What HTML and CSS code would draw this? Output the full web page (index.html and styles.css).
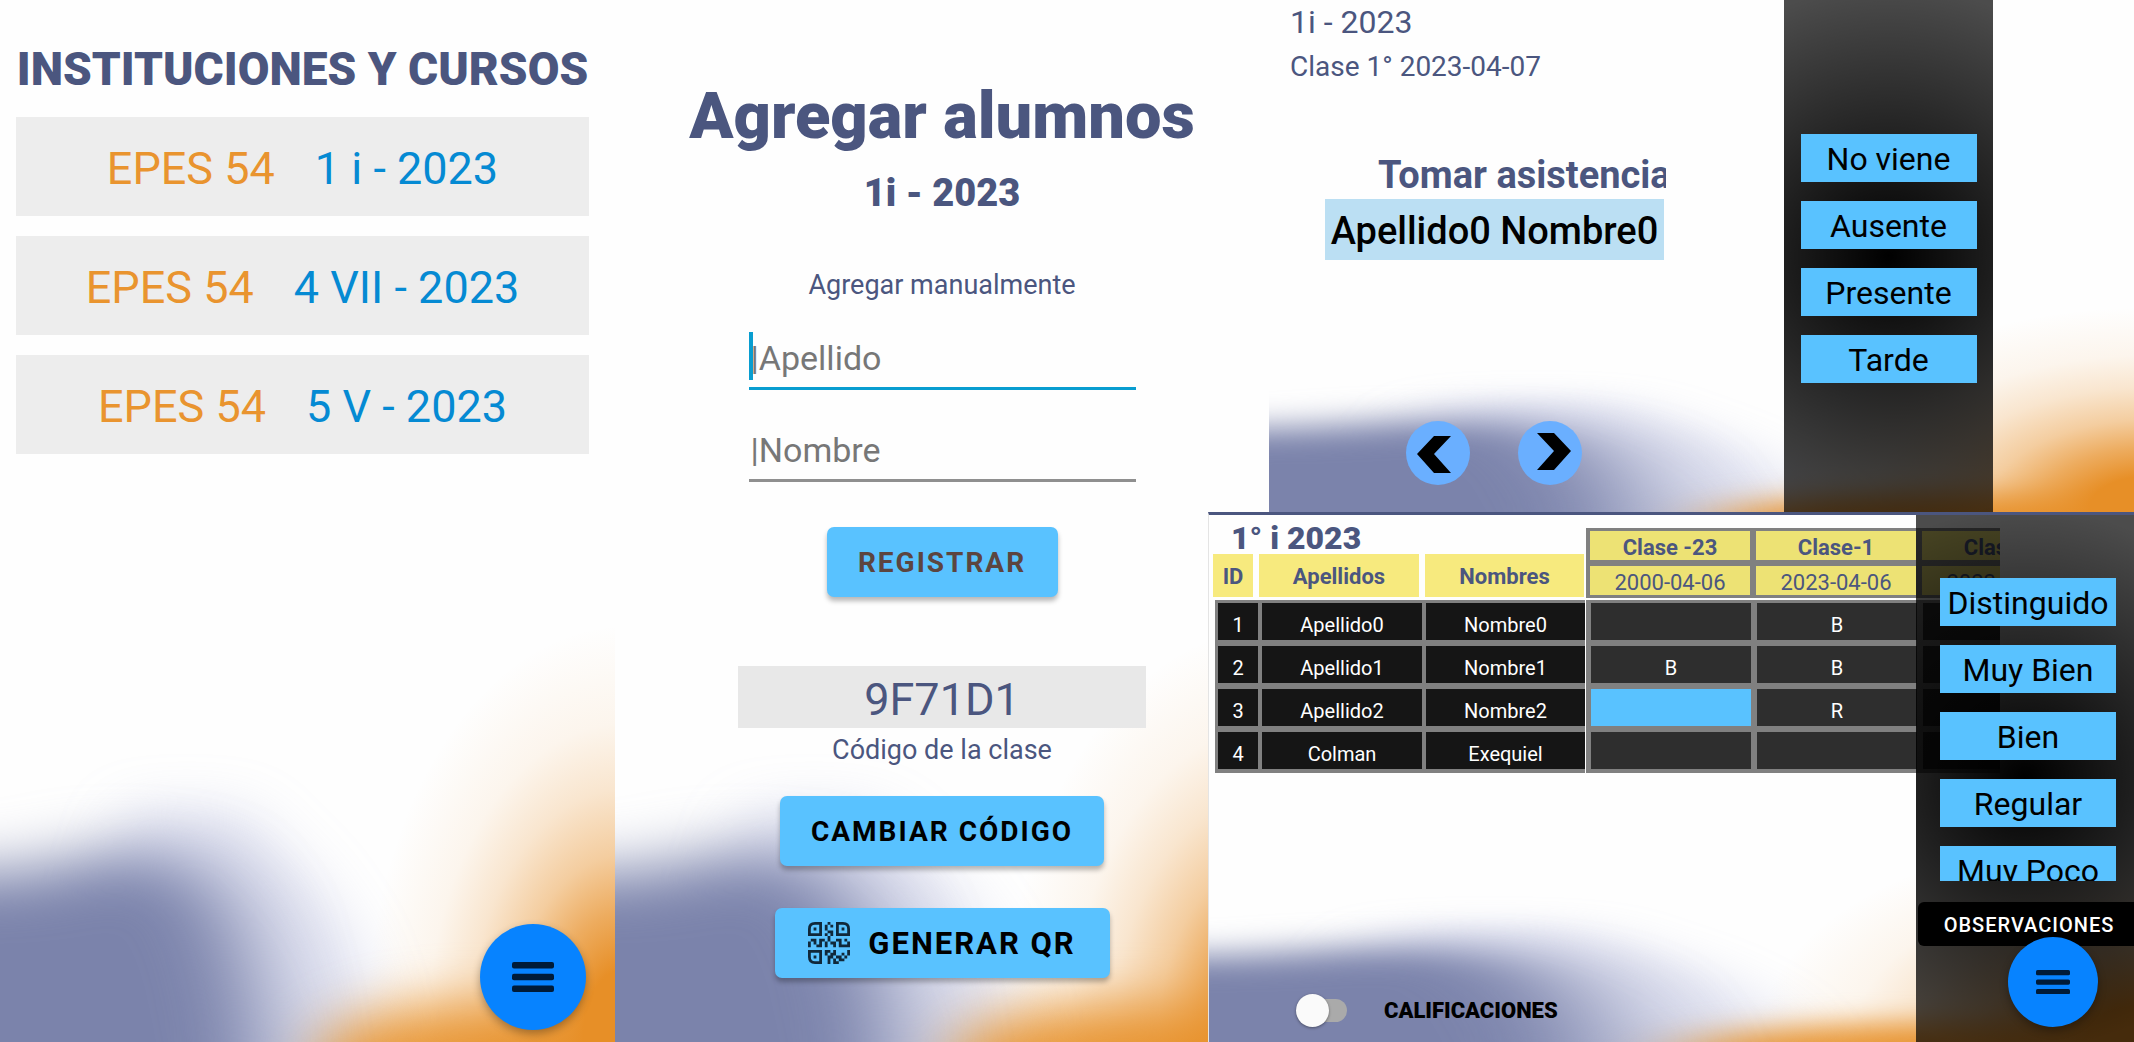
FILE: index.html
```html
<!DOCTYPE html>
<html lang="es">
<head>
<meta charset="utf-8">
<meta name="viewport" content="width=device-width, initial-scale=1">
<title>Instituciones y cursos</title>
<link rel="stylesheet" href="styles.css">
</head>
<body>
<main class="board">
  <section class="panel courses">
    <h1 class="courses-title">INSTITUCIONES Y CURSOS</h1>
    <ul class="course-list">
      <li><a class="course" href="#"><span class="school">EPES 54</span><span class="group">1 i - 2023</span></a></li>
      <li><a class="course" href="#"><span class="school">EPES 54</span><span class="group">4 VII - 2023</span></a></li>
      <li><a class="course" href="#"><span class="school">EPES 54</span><span class="group">5 V - 2023</span></a></li>
    </ul>
    <button class="fab" type="button" aria-label="Menú">
      <svg class="fab-icon" viewBox="0 0 42 30"><rect width="42" height="6.500" rx="2"/><rect y="11.700" width="42" height="6.500" rx="2"/><rect y="23.400" width="42" height="6.500" rx="2"/></svg>
    </button>
  </section>

  <section class="panel students">
    <h2 class="students-title">Agregar alumnos</h2>
    <p class="students-group">1i - 2023</p>
    <form class="students-form">
      <p class="note">Agregar manualmente</p>
      <div class="field field-active"><input type="text" placeholder="|Apellido" aria-label="Apellido"></div>
      <div class="field"><input type="text" placeholder="|Nombre" aria-label="Nombre"></div>
      <button class="btn btn-register" type="button">REGISTRAR</button>
    </form>
    <output class="code">9F71D1</output>
    <p class="note code-note">Código de la clase</p>
    <button class="btn btn-code" type="button">CAMBIAR CÓDIGO</button>
    <button class="btn btn-qr" type="button">
      <svg class="qr" viewBox="0 0 15 15" aria-hidden="true">
        <path d="M4.500 .5H2.500Q.5 .5 .5 2.500V4.500H4.500zM10.500 .5H12.500Q14.500 .5 14.500 2.500V4.500H10.500zM.5 10.500H4.500V14.500H2.500Q.5 14.500 .5 12.500z"/>
        <path d="M2 2.500h1M12 2.500h1M2 12.500h1M7 .5h1M6 1.500h1M8 1.500h1M6 2.500h1M7 3.500h2M6 4.500h1M8 4.500h1M7 5.500h1M1 6.500h2M4 6.500h2M7 6.500h1M10 6.500h2M13 6.500h1M0 7.500h1M2 7.500h1M4 7.500h1M6 7.500h1M8 7.500h2M11 7.500h1M14 7.500h1M0 8.500h1M3 8.500h2M6 8.500h1M9 8.500h1M11 8.500h4M6 10.500h2M9 10.500h1M14 10.500h1M6 11.500h1M8 11.500h2M12 11.500h1M14 11.500h1M7 12.500h2M10 12.500h2M13 12.500h1M7 13.500h1M9 13.500h1M11 13.500h2M7 14.500h1M9 14.500h2"/>
      </svg>
      GENERAR QR
    </button>
  </section>

  <section class="panel attendance">
    <div class="attendance-main">
      <p class="lesson">1i - 2023</p>
      <p class="lesson lesson-date">Clase 1° 2023-04-07</p>
      <h2 class="attendance-title">Tomar asistencia</h2>
      <p class="student">Apellido0 Nombre0</p>
      <div class="steps">
        <button class="step" type="button" aria-label="Anterior"><svg viewBox="0 0 64 64"><path d="M28 15h17L28 33l17 19H28L11 33z"/></svg></button>
        <button class="step" type="button" aria-label="Siguiente"><svg viewBox="0 0 64 64"><path d="M19 12h17l17 18-17 19H19l17-19z"/></svg></button>
      </div>
    </div>
    <aside class="shade attendance-side">
      <button class="option" type="button">No viene</button>
      <button class="option" type="button">Ausente</button>
      <button class="option" type="button">Presente</button>
      <button class="option" type="button">Tarde</button>
    </aside>
  </section>

  <section class="panel grades">
    <div class="grades-main">
      <div class="roster">
        <h2 class="grades-title">1° i 2023</h2>
        <table class="names">
          <thead><tr><th>ID</th><th>Apellidos</th><th>Nombres</th></tr></thead>
          <tbody>
            <tr><td>1</td><td>Apellido0</td><td>Nombre0</td></tr>
            <tr><td>2</td><td>Apellido1</td><td>Nombre1</td></tr>
            <tr><td>3</td><td>Apellido2</td><td>Nombre2</td></tr>
            <tr><td>4</td><td>Colman</td><td>Exequiel</td></tr>
          </tbody>
        </table>
      </div>
      <div class="marks-scroll">
        <table class="marks">
          <thead>
            <tr><th>Clase -23</th><th>Clase-1</th><th>Clase-2</th></tr>
            <tr><td>2000-04-06</td><td>2023-04-06</td><td>2023-04-07</td></tr>
          </thead>
          <tbody>
            <tr><td></td><td>B</td><td></td></tr>
            <tr><td>B</td><td>B</td><td></td></tr>
            <tr><td class="selected"></td><td>R</td><td></td></tr>
            <tr><td></td><td></td><td></td></tr>
          </tbody>
        </table>
      </div>
    </div>
    <label class="switch"><input type="checkbox"><span>CALIFICACIONES</span></label>
    <aside class="shade grades-side">
      <div class="options-scroll">
        <button class="option" type="button">Distinguido</button>
        <button class="option" type="button">Muy Bien</button>
        <button class="option" type="button">Bien</button>
        <button class="option" type="button">Regular</button>
        <button class="option" type="button">Muy Poco</button>
      </div>
      <button class="remarks" type="button">OBSERVACIONES</button>
      <button class="fab fab-small" type="button" aria-label="Menú">
        <svg class="fab-icon" viewBox="0 0 42 30"><rect width="42" height="6.500" rx="2"/><rect y="11.700" width="42" height="6.500" rx="2"/><rect y="23.400" width="42" height="6.500" rx="2"/></svg>
      </button>
    </aside>
  </section>
</main>
</body>
</html>
```
FILE: styles.css
```css
:root {
  --ink: #4b567f;
  --sky: #59c2ff;
  --azure: #0783ff;
  --orange: #e9942f;
}

* { box-sizing: border-box; }

body {
  margin: 0;
  font-family: Roboto, "Liberation Sans", sans-serif;
  color: var(--ink);
  background: #fff;
}

h1, h2, p, ul { margin: 0; padding: 0; }
ul { list-style: none; }
a { text-decoration: none; }
button, input { font: inherit; border: 0; padding: 0; }

/* The four screens; the grades screen overlaps the right edge of the students one. */
.board {
  display: grid;
  grid-template-columns: 615fr 593fr 61fr 865fr;
  grid-template-rows: 512fr 530fr;
  min-height: 100vh;
}

.panel {
  position: relative;
  min-width: 0;
  overflow: hidden;
  background: #fefefe url("data:image/svg+xml,%3Csvg xmlns='http://www.w3.org/2000/svg' viewBox='0 0 615 1042' preserveAspectRatio='none'%3E%3Cdefs%3E%3CradialGradient id='o' gradientUnits='userSpaceOnUse' cx='0' cy='0' r='1' gradientTransform='matrix(260 0 0 410 625 1035)'%3E%3Cstop offset='.16' stop-color='%23e78f27'/%3E%3Cstop offset='.3' stop-color='%23e78f27' stop-opacity='.74'/%3E%3Cstop offset='.44' stop-color='%23e78f27' stop-opacity='.44'/%3E%3Cstop offset='.6' stop-color='%23e78f27' stop-opacity='.22'/%3E%3Cstop offset='.76' stop-color='%23e78f27' stop-opacity='.08'/%3E%3Cstop offset='1' stop-color='%23e78f27' stop-opacity='0'/%3E%3C/radialGradient%3E%3Cfilter id='a' x='-50%25' y='-50%25' width='200%25' height='200%25' color-interpolation-filters='sRGB'%3E%3CfeGaussianBlur stdDeviation='46 30'/%3E%3C/filter%3E%3Cfilter id='b' x='-50%25' y='-50%25' width='200%25' height='200%25' color-interpolation-filters='sRGB'%3E%3CfeGaussianBlur stdDeviation='30 26'/%3E%3C/filter%3E%3C/defs%3E%3Cpath fill='%238f98cc' fill-opacity='.28' filter='url(%23b)' d='M100 900L130 810 240 810 310 880 350 940 375 1010 380 1200 100 1200z'/%3E%3Cellipse cx='475' cy='1065' rx='165' ry='62' fill='%23e78f27' fill-opacity='.9' filter='url(%23b)'/%3E%3Cpath fill='url(%23o)' d='M300 500h315v542H300z'/%3E%3Cpath fill='%237b83ab' filter='url(%23a)' d='M-250 868L20 874 110 850 190 860 235 912 255 980 266 1040 266 1300-250 1300z'/%3E%3C/svg%3E") 0 0 / 100% 100% no-repeat;
}

.courses { grid-area: 1 / 1 / 3 / 2; padding: 41px 26px 12px 16px; display: flex; flex-direction: column; }
.students { grid-area: 1 / 2 / 3 / 4; }
.attendance { grid-area: 1 / 4 / 2 / 5; }
.grades { grid-area: 2 / 3 / 3 / 5; border-top: 3px solid var(--ink); border-left: 1px solid #e4e4e4; }

/* Courses */
.courses-title { font-size: 46px; font-weight: 900; line-height: 56px; white-space: nowrap; text-align: center; margin-bottom: 20px; }
.course-list { display: grid; gap: 20px; }
.course {
  display: flex;
  justify-content: center;
  align-items: center;
  gap: 40px;
  height: 99px;
  padding-top: 4px;
  background: rgb(0 0 0 / 6.5%);
  font-size: 45px;
}
.school { color: var(--orange); }
.group { color: #058ad3; }

.fab {
  display: grid;
  place-items: center;
  width: 106px;
  height: 106px;
  border-radius: 50%;
  background: var(--azure);
  box-shadow: 0 4px 8px rgb(0 0 0 / 30%);
}
.fab-icon { width: 42px; fill: #001b38; }
.courses .fab { margin: auto 3px 0 auto; }

/* Students */
.students { display: flex; flex-direction: column; align-items: center; padding-top: 76px; }
.students-title { font-size: 65px; font-weight: 900; line-height: 80px; }
.students-group { font-size: 38px; font-weight: 900; line-height: 46px; margin-top: 14px; }
.students-form { display: flex; flex-direction: column; align-items: center; margin-top: 51px; }
.note { font-size: 27px; line-height: 36px; }
.field { position: relative; width: 387px; margin-top: 26px; }
.field + .field { margin-top: 31px; }
.field input {
  display: block;
  width: 100%;
  height: 61px;
  padding: 0 0 0 2px;
  background: transparent;
  border-bottom: 3px solid #8f8f8f;
  border-radius: 0;
  font-size: 34px;
}
.field input::placeholder { color: #777; opacity: 1; }
.field-active input { border-bottom-color: #089dd0; }
.field-active::before { content: ""; position: absolute; left: 0; top: 3px; width: 4px; height: 48px; background: #089dd0; }
.btn {
  display: flex;
  justify-content: center;
  align-items: center;
  height: 70px;
  border-radius: 7px;
  background: var(--sky);
  box-shadow: 0 4px 5px rgb(0 0 0 / 28%);
  color: #000;
  font-size: 28px;
  font-weight: 700;
  letter-spacing: 2px;
}
.btn-register { width: 231px; margin-top: 45px; color: #5c4540; }
.code { display: block; width: 408px; height: 62px; margin-top: 69px; background: #e8e8e8; font-size: 45px; line-height: 68px; text-align: center; }
.code-note { margin-top: 4px; }
.btn-code { width: 324px; margin-top: 28px; }
.btn-qr { width: 335px; margin-top: 42px; gap: 18px; font-size: 31px; }
.qr { width: 42px; height: 42px; fill: none; stroke: #10283a; }

/* Attendance */
.attendance { display: grid; grid-template-columns: 515fr 209fr 141fr; }
.attendance-main { padding: 0 0 0 21px; }
.lesson { font-size: 32px; line-height: 44px; }
.lesson-date { font-size: 28px; line-height: 46px; }
.attendance-title { width: 288px; margin: 61px 0 0 88px; overflow: hidden; font-size: 38px; font-weight: 700; line-height: 48px; white-space: nowrap; }
.student { width: 339px; height: 61px; margin-left: 35px; background: #bbdff3; color: #000; font-size: 38px; font-weight: 500; line-height: 65px; text-align: center; white-space: nowrap; }
.steps { display: flex; gap: 48px; margin: 161px 0 0 116px; }
.step { width: 64px; height: 64px; border-radius: 50%; background: #6aafff; }
.step svg { display: block; }
.shade { background: radial-gradient(circle 270px at center, #000, rgb(0 0 0 / 70%)); }
.attendance-side { display: flex; flex-direction: column; align-items: center; gap: 19px; padding-top: 134px; }
.option { flex: none; width: 176px; height: 48px; padding-top: 2px; background: var(--sky); color: #000; font-size: 32px; white-space: nowrap; }

/* Grades */
.grades-main { display: flex; width: 792px; padding: 13px 0 0 4px; }
.roster { width: 373px; }
.grades-title { margin: -3px 0 3px; padding-left: 18px; font-size: 32px; font-weight: 900; line-height: 26px; }
.names, .marks { display: block; font-size: 20px; text-align: center; }
.names thead, .names tbody, .marks thead, .marks tbody { display: grid; }
.names tr { display: grid; grid-template-columns: 40px 160px 159px; }
.names th, .names td, .marks th, .marks td { display: block; height: 37px; padding: 0; font-weight: 400; line-height: 44px; white-space: nowrap; }
.names thead tr { column-gap: 6px; }
.names th { height: 43px; background: #f7ea7e; font-size: 22px; font-weight: 700; line-height: 46px; }
.names tbody { row-gap: 6px; width: 370px; margin: 3px 0 0 2px; padding: 3px 0 4px 3px; background: #808080; }
.names tbody tr { column-gap: 4px; }
.names td { background: #151515; color: #fff; }
.marks-scroll { width: 414px; overflow: hidden; }
.marks { width: 501px; }
.marks tr { display: grid; grid-template-columns: repeat(3, 160px); column-gap: 6px; }
.marks thead { row-gap: 6px; padding: 3px 0 3px 4px; background: #808080; }
.marks thead th, .marks thead td { height: 29px; background: #ede274; font-size: 22px; line-height: 33px; }
.marks thead th { font-weight: 700; }
.marks tbody { row-gap: 6px; margin-top: 2px; padding: 3px 0 4px 5px; background: #808080; }
.marks tbody td { background: #2e2e2e; color: #fff; }
.marks tbody td.selected { background: var(--sky); }

.switch { position: absolute; left: 87px; bottom: 19px; display: flex; align-items: center; gap: 37px; color: #000; font-size: 22px; font-weight: 900; }
.switch input { appearance: none; position: relative; width: 47px; height: 23px; margin: 0 0 0 4px; border-radius: 12px; background: #aaa; }
.switch input::before { content: ""; position: absolute; left: -4px; top: -5px; width: 33px; height: 33px; border-radius: 50%; background: #fafafa; box-shadow: 0 1px 3px rgb(0 0 0 / 40%); }

.grades-side { position: absolute; inset: 0 0 0 auto; width: 218px; padding-top: 63px; }
.options-scroll { display: flex; flex-direction: column; gap: 19px; height: 303px; margin-left: 24px; overflow: hidden; }
.remarks { display: block; width: 216px; height: 44px; margin: 21px 0 0 2px; padding: 2px 0 0 6px; border-radius: 6px 0 0 6px; background: #000; color: #fff; font-size: 20px; font-weight: 500; letter-spacing: 1px; }
.fab-small { position: absolute; right: 36px; bottom: 15px; width: 90px; height: 90px; }
.fab-small .fab-icon { width: 34px; }
```
